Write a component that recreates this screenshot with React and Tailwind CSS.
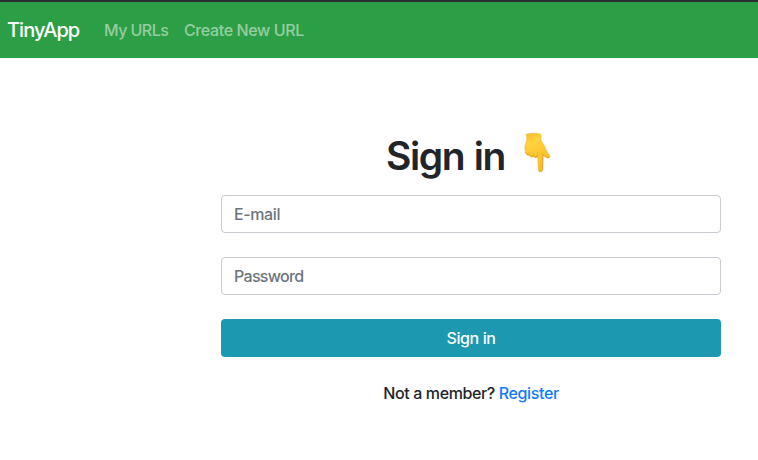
function PointingDown() {
  return (
    <svg viewBox="0 0 30 42" className="h-[42px] w-[30px]" aria-label="Pointing down" role="img">
      <defs>
        <linearGradient id="hand" x1="0" y1="0" x2="0.3" y2="1">
          <stop offset="0" stopColor="#f5bd2c" />
          <stop offset="0.3" stopColor="#ffd23f" />
          <stop offset="1" stopColor="#fcbd22" />
        </linearGradient>
      </defs>
      <path
        d="M3.300 2.300C7.500.900 14 .900 17.800 2.300C18.600 3.500 17.800 5.400 18 7.300C18.400 10 21 12.500 22.300 15.500C23.300 18.800 24.700 20.800 26.600 23.200C27.700 24.900 26.300 26.600 24.400 25.700C22.500 24.900 21.200 24 19.900 22.800L19.500 37.700C19.300 40.200 15.700 40.200 15.400 37.700L14.700 24.600C13.800 26 11.500 26 10.500 24.500C9 25.700 7 25 6.300 23.300C4.400 23.800 2.700 22.300 2.500 20.300C1.600 17 1.500 13.500 2.900 10.800C4 8.500 3.900 6 3.300 2.300Z"
        fill="url(#hand)"
        stroke="#f0ae24"
        strokeWidth=".5"
      />
      <path d="M2.800 20.500Q4 23 6 22.500Q7.500 25.200 10.300 24Q12 25.800 14.500 24.300" fill="none" stroke="#e29a1c" strokeWidth=".9" strokeLinecap="round" />
      <path d="M6.200 22.500V20M10.400 24V21M14.600 24.500V20.500" fill="none" stroke="#eba922" strokeWidth=".7" strokeLinecap="round" />
      <path d="M19.900 22.600L19.500 37.500C19.300 39.700 16.500 40.200 15.700 38.300M20 22.800C22 24.500 25 26.500 26.400 25.200" fill="none" stroke="#e3951a" strokeWidth=".8" />
    </svg>
  );
}

export default function App() {
  return (
    <div className="h-[460px] w-[758px] overflow-hidden bg-white font-['Inter',sans-serif] text-base font-[450] text-[#212529]">
      <nav className="flex h-[58px] items-center border-t-2 border-[#2b3035] bg-[#2c9e45] pl-2">
        <a href="#" className="-ml-px w-[97px] text-xl leading-[30px] tracking-[-0.95px] text-white">TinyApp</a>
        <a href="#" className="w-20 whitespace-nowrap tracking-[-0.55px] text-white/50">My URLs</a>
        <a href="#" className="whitespace-nowrap tracking-[-0.38px] text-white/50">Create New URL</a>
      </nav>
      <main className="ml-[221px] flex w-[500px] flex-col pt-[74px]">
        <h1 className="flex h-12 items-center pl-[165px] text-[39px] leading-12 font-[560] tracking-[-1.4px]">
          <span className="w-[137px] [word-spacing:1px]">Sign in</span>
          <span className="-mt-1.5"><PointingDown /></span>
        </h1>
        <form className="mt-[15px] flex flex-col gap-6">
          <input type="email" placeholder="E-mail" className="h-[38px] rounded border border-[#c6ccd2] px-3 tracking-[-0.4px] placeholder:text-[#6c757d]" />
          <input type="password" placeholder="Password" className="h-[38px] rounded border border-[#c6ccd2] px-3 tracking-[-0.7px] placeholder:text-[#6c757d]" />
          <button type="button" className="h-[38px] rounded bg-[#1c98b0] tracking-[-0.4px] text-white">Sign in</button>
        </form>
        <p className="mt-6 text-center tracking-[-0.38px]">
          Not a member? <a href="#" className="text-[#0d7bff]">Register</a>
        </p>
      </main>
    </div>
  );
}
